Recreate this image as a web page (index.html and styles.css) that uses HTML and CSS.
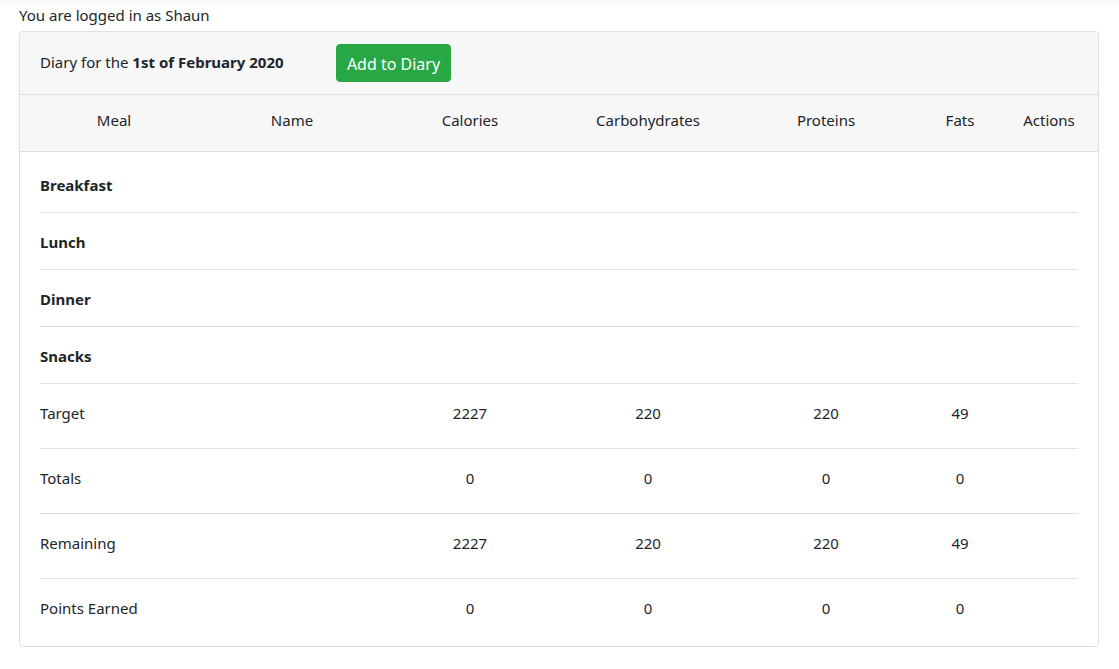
FILE: index.html
```html
<!DOCTYPE html>
<html lang="en">
<head>
<meta charset="utf-8">
<title>Diary</title>
<link rel="stylesheet" href="styles.css">
</head>
<body>
<div class="topstrip"></div>
<main class="page">
  <p class="logged">You are logged in as Shaun</p>
  <section class="card">
    <header class="card-header">
      <div class="diary-title">Diary for the <strong>1st of February 2020</strong></div>
      <button class="btn-add" type="button">Add to Diary</button>
    </header>
    <div class="thead">
      <div class="cell center">Meal</div>
      <div class="cell center">Name</div>
      <div class="cell center">Calories</div>
      <div class="cell center">Carbohydrates</div>
      <div class="cell center">Proteins</div>
      <div class="cell center">Fats</div>
      <div class="cell center">Actions</div>
    </div>
    <div class="card-body">
      <div class="meal-row"><strong>Breakfast</strong></div>
      <div class="meal-row"><strong>Lunch</strong></div>
      <div class="meal-row"><strong>Dinner</strong></div>
      <div class="meal-row"><strong>Snacks</strong></div>
      <div class="sum-row">
        <div class="cell">Target</div><div class="cell"></div>
        <div class="cell center">2227</div><div class="cell center">220</div>
        <div class="cell center">220</div><div class="cell center">49</div><div class="cell"></div>
      </div>
      <div class="sum-row">
        <div class="cell">Totals</div><div class="cell"></div>
        <div class="cell center">0</div><div class="cell center">0</div>
        <div class="cell center">0</div><div class="cell center">0</div><div class="cell"></div>
      </div>
      <div class="sum-row">
        <div class="cell">Remaining</div><div class="cell"></div>
        <div class="cell center">2227</div><div class="cell center">220</div>
        <div class="cell center">220</div><div class="cell center">49</div><div class="cell"></div>
      </div>
      <div class="sum-row last">
        <div class="cell">Points Earned</div><div class="cell"></div>
        <div class="cell center">0</div><div class="cell center">0</div>
        <div class="cell center">0</div><div class="cell center">0</div><div class="cell"></div>
      </div>
    </div>
  </section>
</main>
</body>
</html>
```
FILE: styles.css
```css
* { box-sizing: border-box; }
html, body { margin: 0; padding: 0; background: #fff; }
body {
  font-family: "Noto Sans", "Open Sans", sans-serif;
  font-size: 15px;
  line-height: 24px;
  color: #212529;
}
.topstrip { height: 4px; background: #f7f8f9; }
.page { padding: 0 0 0 19px; }
.logged { margin: 0; height: 24px; line-height: 22px; }
.card {
  margin-top: 3px;
  width: 1080px;
  border: 1px solid #dfdfdf;
  border-radius: 4px;
  background: #fff;
  overflow: hidden;
}
.card-header {
  display: grid;
  grid-template-columns: 296px auto;
  align-items: center;
  justify-content: start;
  padding: 12px 20px;
  background: #f7f7f7;
  border-bottom: 1px solid #dfdfdf;
}
.diary-title { padding-bottom: 2px; }
.diary-title strong { font-weight: 700; }
.btn-add {
  width: 115px;
  height: 38px;
  padding: 1px 0 0;
  border: 1px solid #28a745;
  border-radius: 4px;
  background: #28a745;
  color: #fff;
  font: inherit;
  font-size: 16px;
  line-height: 24px;
}
.thead, .sum-row {
  display: grid;
  grid-template-columns: 148px 208px 148px 208px 148px 120px 58px;
}
.thead {
  padding: 13px 20px 19px;
  background: #f7f7f7;
  border-bottom: 1px solid #dfdfdf;
}
.center { text-align: center; }
.cell { white-space: nowrap; }
.card-body { padding: 4px 20px 3px; }
.meal-row {
  padding: 17px 0 15px;
  border-bottom: 1px solid #dee2e6;
}
.meal-row strong { font-weight: 700; }
.sum-row {
  padding: 17px 0 23px;
  border-bottom: 1px solid #dee2e6;
}
.sum-row.last { border-bottom: 0; }
```
